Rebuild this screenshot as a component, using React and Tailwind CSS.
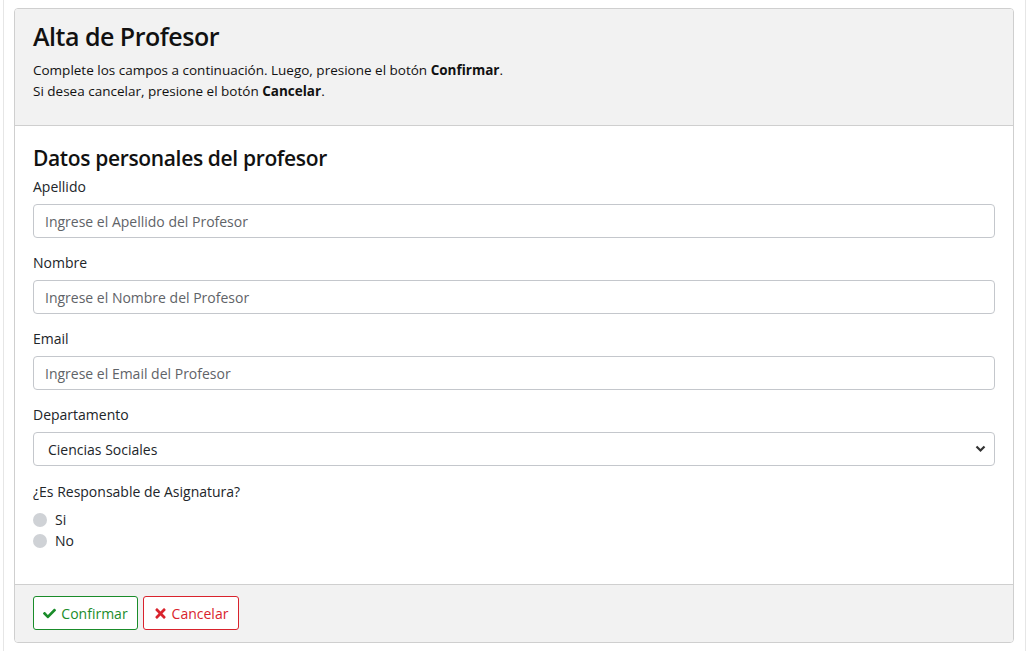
import { FaCheck, FaTimes } from "react-icons/fa";

function Field({ label, placeholder }) {
  return (
    <div className="mb-[14px]">
      <label className="block text-[14px] leading-[21px] text-[#212529] mb-[7px]">{label}</label>
      <input
        type="text"
        placeholder={placeholder}
        className="block w-full h-[34px] px-[11px] rounded-[4px] border border-[#c4c7cc] text-[14px] text-[#495057] placeholder-[#5f6368] bg-white"
      />
    </div>
  );
}

export default function App() {
  return (
    <div className="min-h-[651px] bg-white" style={{ fontFamily: '"Open Sans", "Noto Sans", sans-serif' }}>
      <div className="ml-[3px] w-[1023px] min-h-[651px] border-x border-[#e6e6e6] pt-[8px] pl-[10px]">
        <div className="w-[1000px] border border-[#cfcfcf] rounded-[4px] overflow-hidden">
          {/* header */}
          <div className="bg-[#f2f2f2] border-b border-[#cfcfcf] h-[117px] px-[18px] pt-[11px]">
            <h1 className="text-[25px] leading-[32px] font-semibold tracking-[-0.5px] text-[#111]">Alta de Profesor</h1>
            <p className="mt-[8px] text-[13.5px] leading-[21px] text-[#111]">
              Complete los campos a continuación. Luego, presione el botón <b>Confirmar</b>.
            </p>
            <p className="text-[13.5px] leading-[21px] text-[#111]">
              Si desea cancelar, presione el botón <b>Cancelar</b>.
            </p>
          </div>

          {/* body */}
          <div className="bg-white px-[18px] pt-[18px] pb-[33px] border-b border-[#cfcfcf]">
            <h2 className="text-[21px] leading-[28px] font-semibold tracking-[-0.35px] text-[#111] mb-[4px]">Datos personales del profesor</h2>
            <Field label="Apellido" placeholder="Ingrese el Apellido del Profesor" />
            <Field label="Nombre" placeholder="Ingrese el Nombre del Profesor" />
            <Field label="Email" placeholder="Ingrese el Email del Profesor" />
            <div className="mb-[15px]">
              <label className="block text-[14px] leading-[21px] text-[#212529] mb-[7px]">Departamento</label>
              <div className="relative">
                <select className="block w-full h-[34px] pl-[14px] pr-8 rounded-[4px] border border-[#c4c7cc] text-[14px] text-[#212529] bg-white appearance-none">
                  <option>Ciencias Sociales</option>
                </select>
                <svg className="absolute right-[9px] top-[13px] pointer-events-none" width="11" height="8" viewBox="0 0 11 8">
                  <path d="M1.5 1.5 L5.5 5.5 L9.5 1.5" fill="none" stroke="#333" strokeWidth="2.2" />
                </svg>
              </div>
            </div>
            <div className="text-[14px] leading-[21px] text-[#212529] mb-[7px]">¿Es Responsable de Asignatura?</div>
            <div className="flex items-center gap-[8px] h-[21px]">
              <span className="w-[14px] h-[14px] rounded-full bg-[#cfd2d6] inline-block" />
              <span className="text-[14px] text-[#212529]">Si</span>
            </div>
            <div className="flex items-center gap-[8px] h-[21px]">
              <span className="w-[14px] h-[14px] rounded-full bg-[#cfd2d6] inline-block" />
              <span className="text-[14px] text-[#212529]">No</span>
            </div>
          </div>

          {/* footer */}
          <div className="bg-[#f2f2f2] h-[57px] px-[18px] pt-[11px] flex gap-[5px] items-start">
            <button className="h-[34px] w-[105px] flex items-center justify-center gap-[5px] rounded-[3px] border border-[#1a8c2a] bg-white text-[#1a8c2a] text-[14px]">
              <FaCheck className="w-[13px] h-[13px]" />
              Confirmar
            </button>
            <button className="h-[34px] w-[96px] flex items-center justify-center gap-[5px] rounded-[3px] border border-[#d9232d] bg-white text-[#d9232d] text-[14px]">
              <FaTimes className="w-[13px] h-[15px]" />
              Cancelar
            </button>
          </div>
        </div>
      </div>
    </div>
  );
}
